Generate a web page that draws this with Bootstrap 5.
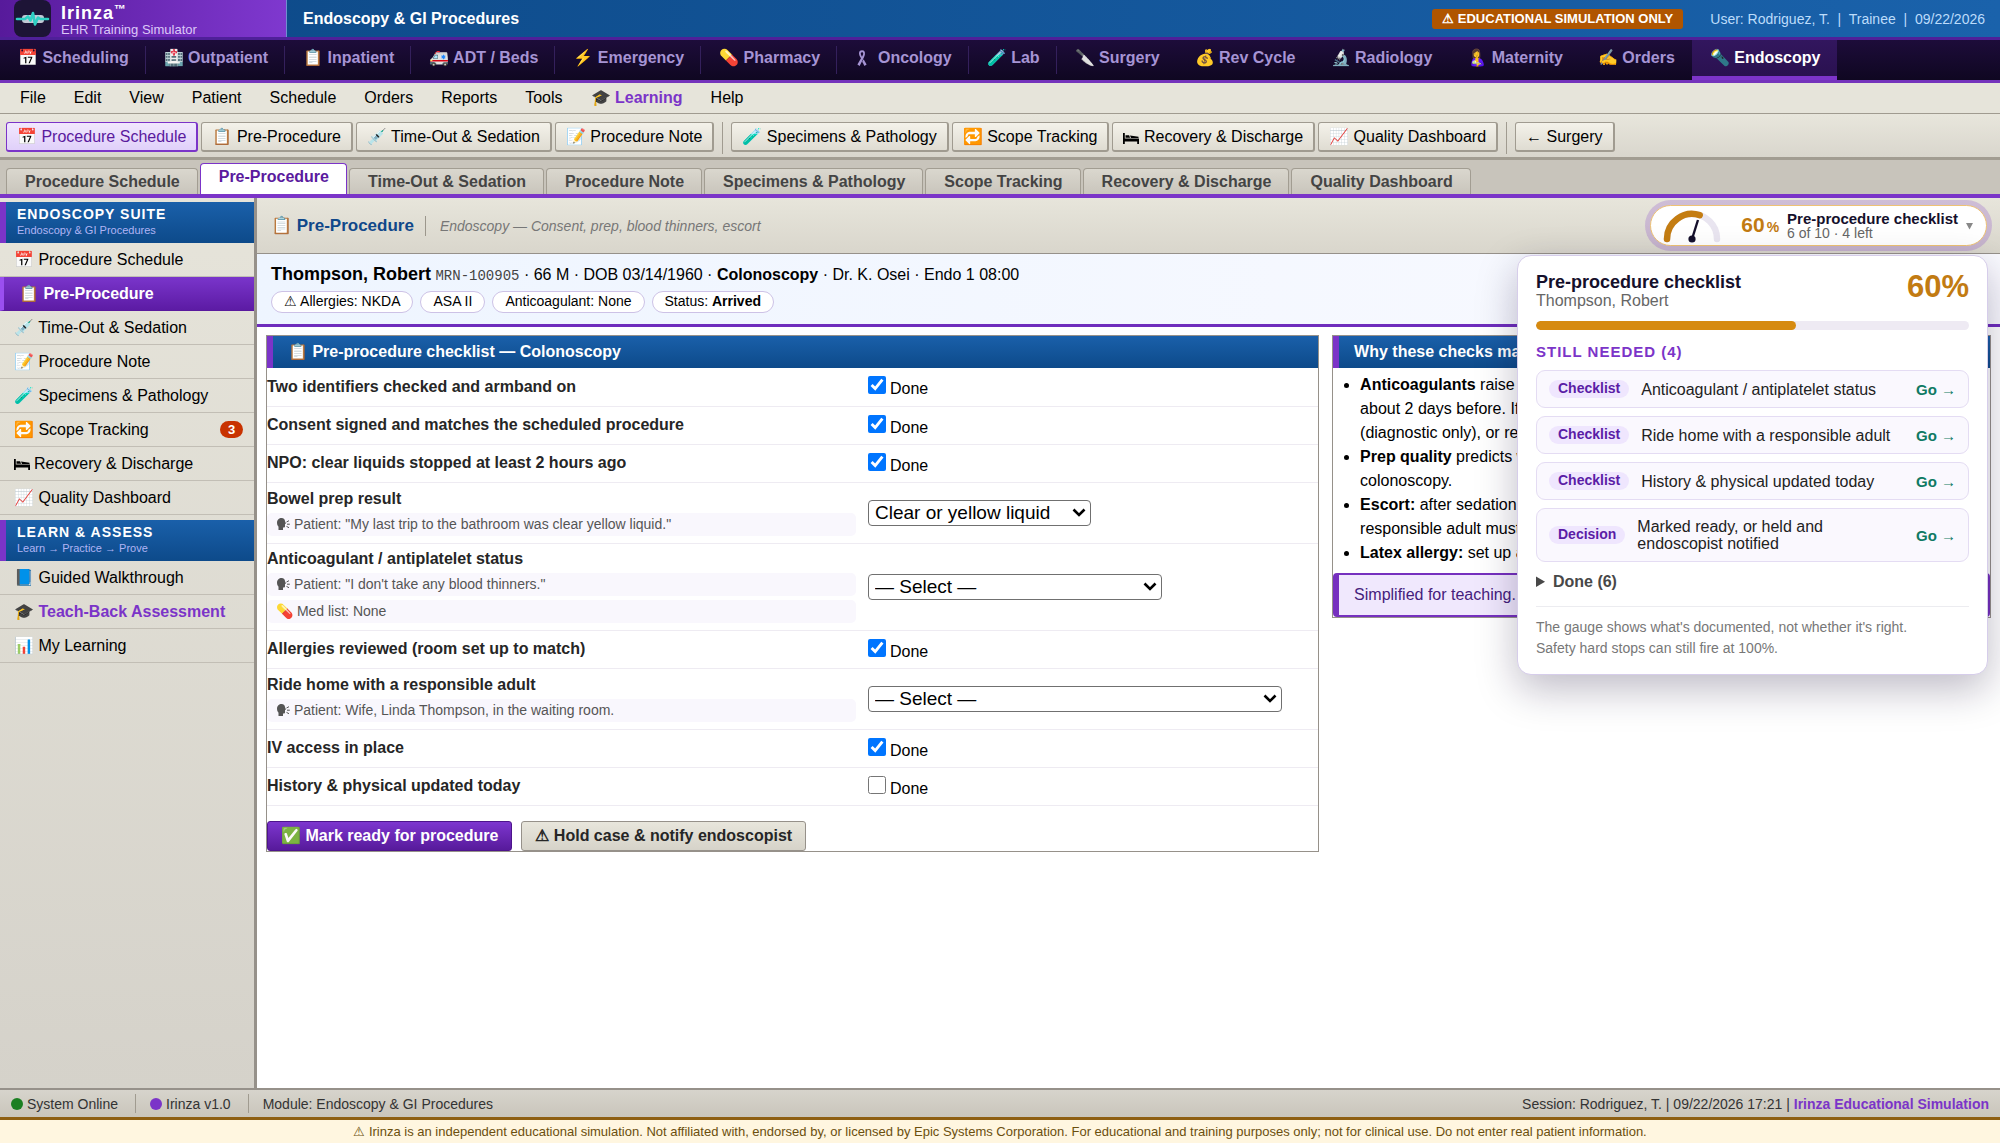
<!DOCTYPE html>
<html lang="en">
<head>
<meta charset="utf-8">
<meta name="viewport" content="width=device-width, initial-scale=1">
<title>Irinza – Endoscopy – Pre-Procedure</title>
<link href="https://cdn.jsdelivr.net/npm/bootstrap@5.3.0/dist/css/bootstrap.min.css" rel="stylesheet">
<style>
:root{--violet:#7b34c8;--violet-dark:#5a1a9e;--line:#96918a}
body{font-family:"Liberation Sans",Arial,sans-serif;font-size:16px;line-height:18px;color:#000;background:#fff}
a{text-decoration:none;color:inherit}
.ico{fill:currentColor;flex:none;vertical-align:-2px}

.titlebar{height:40px;border-bottom:3px solid #4f2099;background:linear-gradient(90deg,#0c4886,#1a62ab);color:#fff}
.brand{width:287px;padding-left:14px;gap:10px;background:linear-gradient(90deg,#571a9b,#7f38cf);border-right:1px solid #6f8fd0}
.brand-text{padding-top:4px}
.brand-name{font-size:18px;line-height:17px;letter-spacing:1px}
.brand-name sup{font-size:12px;letter-spacing:0;top:-6px;line-height:0}
.brand-sub{font-size:13px;line-height:15px;color:#dcc8f8}
.sim-badge{background:#b05500;border-radius:3px;font-size:13px;line-height:20px;padding:0 10px}
.user-info{color:#bcdcfb;padding:0 15px 0 27px;font-size:14px;white-space:pre}

.modules{height:43px;border-bottom:3px solid #7433bb;background:linear-gradient(#1d0c3a,#0f0721)}
.modules a{position:relative;padding:0 17px 0 18px;color:#a694d4;font-weight:700;border-bottom:4px solid transparent;display:flex;align-items:center;height:40px;white-space:pre}
.modules a.sep::after{content:"";position:absolute;right:0;top:6px;height:28px;width:1px;background:#34205c}
.modules a.current{color:#fff;background:linear-gradient(#32165e,#2a1150);border-bottom-color:#7d34c9}

.menus{height:31px;gap:28px;padding:0 20px;background:#e6e4da;border-bottom:1px solid #a09b90}
.learn{color:var(--violet);font-weight:700}

.tools{height:46px;padding:8px 6px;gap:3px;background:linear-gradient(#e8e6dc,#d9d6cd);border-bottom:3px solid #a29d92}
.tool{height:30px;padding:0 10px;border:1px solid #a09b90;border-bottom-width:2px;border-right-width:2px;border-radius:3px;background:linear-gradient(#f4f2ea,#dfdcd2);white-space:nowrap;color:#000}
.tool.on{border-color:var(--violet);background:linear-gradient(#f1e8fe,#e0d0fa);color:var(--violet-dark)}
.tool-sep{width:1px;height:32px;margin:0 5px;background:#a09b90}

.tabs{height:38px;padding:0 6px;gap:2px;background:#c8c4bb;border-bottom:4px solid var(--violet)}
.tabs a{height:26px;padding:3px 17px 0 18px;border:1px solid #a29d92;border-bottom:0;border-radius:4px 4px 0 0;background:linear-gradient(#dad7ce,#c9c5bc);color:#444;font-weight:700;line-height:20px}
.tabs a.on{height:31px;border-color:var(--violet);background:#fff;color:var(--violet-dark)}

.side{width:257px;flex:none;padding-top:4px;border-right:3px solid var(--line);background:linear-gradient(#e6e4da,#d5d2ca)}
.side-head{height:41px;padding:2px 11px 0;border-left:6px solid var(--violet);background:linear-gradient(#1a60aa,#0d4a8a);color:#fff}
.side-head b{display:block;font-size:14px;line-height:20px;letter-spacing:1px}
.side-head span{display:block;font-size:11px;line-height:12px;color:#b0b4f4}
.side-link{display:flex;align-items:center;height:34px;padding:0 11px 0 14px;border-bottom:1px solid #c2beb5}
.side-link.on{padding-left:15px;border-left:4px solid #9a4ff0;border-bottom-color:#5a1a9e;background:linear-gradient(#7a35cb,#5c1ba4);color:#fff;font-weight:700}
.side-link + .side-head{margin-top:5px}
.count{width:23px;height:17px;border-radius:9px;background:#c83200;color:#fff;font-size:13px;line-height:17px;text-align:center;font-weight:700}

.page-head{height:56px;padding:0 13px 0 14px;background:linear-gradient(#e7e5db,#d9d6cc);border-bottom:1px solid var(--line)}
.page-title{font-size:17px;line-height:20px;font-weight:700;color:#10488a;margin:0}
.page-desc{font-size:14px;font-style:italic;color:#777;border-left:1px solid #9c978c;margin-left:11px;padding-left:14px;line-height:20px}

.gauge{height:41px;padding:0 13px 0 10px;border:1px solid #eec274;border-radius:21px;background:#fff;box-shadow:0 0 0 5px rgba(124,52,200,.22)}
.gauge-pct{color:#c27b12;font-size:21px;font-weight:700;margin-left:20px}
.gauge-pct small{font-size:14px;margin-left:2px;font-weight:700}
.gauge-name{font-size:15px;line-height:15px;font-weight:700;color:#15102c;display:block}
.gauge-left{font-size:14px;line-height:15px;color:#666;display:block}

.patient{padding:11px 14px 0;height:73px;background:linear-gradient(90deg,#eef5ff,#fafaff);border-bottom:3px solid #6f2dbd}
.patient-line{margin-bottom:6px}
.patient-name{font-size:18px}
.mrn{font-family:"Liberation Mono",monospace;font-size:14px;color:#444}
.chips{gap:7px}
.chip{height:22px;line-height:18px;padding:0 12px;border:1px solid #cdc2e6;border-radius:11px;background:#fff;font-size:14px}

.work{padding:8px 9px 0;gap:13px}
.panel{border:1px solid var(--line);background:#fff}
.left-panel{flex:1056 1 0}
.right-panel{flex:660 1 0;min-width:0}
.panel-head{padding:7px 15px;border-left:6px solid var(--violet);background:linear-gradient(#1a60aa,#0d4a8a);color:#fff;font-size:16px;line-height:18px;font-weight:700;margin:0}
.checks{width:100%}
.checks th{width:600px;padding:0 11px 0 0;color:#262626;vertical-align:middle}
.checks tr{border-bottom:1px solid #eeebf2;height:38px}
.checks tr.one{height:61px}
.checks tr.two{height:87px}
.hint{display:block;margin-top:5px;padding:0 9px;height:23px;line-height:22px;border-radius:5px;background:#f9f7fd;color:#555;font-size:14px;font-weight:400}
.hint + .hint{margin-top:4px}
.done{display:inline-flex;gap:4px;line-height:18px;padding-top:5px}
.done input{width:18px;height:18px;margin:-4px 0 4px}
.pick{display:block;height:26px;padding:0 30px 0 6px;border:1px solid #707070;border-radius:4px;font-size:19px;line-height:24px;color:#000;appearance:none;background:#fff url("data:image/svg+xml,%3Csvg xmlns='http://www.w3.org/2000/svg' width='14' height='9' viewBox='0 0 14 9'%3E%3Cpath d='M1.5 1.5 7 7l5.500-5.500' fill='none' stroke='%23000' stroke-width='2.600'/%3E%3C/svg%3E") no-repeat right 4px center}
.pick-s{width:223px}.pick-m{width:294px}.pick-l{width:414px}
.acts{gap:9px;padding-top:15px}
.act{height:30px;padding:0 13px;border:1px solid #4d148c;border-radius:3px;font-weight:700;color:#fff;background:linear-gradient(#7d36cf,#571a9b)}
.act.plain{border-color:#96918a;background:linear-gradient(#e8e6dc,#d6d3c9);color:#262626}

.why{margin:0;padding:5px 10px 8px 27px;line-height:24px;white-space:nowrap;overflow:hidden}
.note{padding:11px 15px;border:2px solid #7630bf;border-left-width:6px;border-radius:4px;background:#f0e8fd;color:#45207c}

.pop{position:absolute;right:12px;top:57px;width:471px;padding:17px 18px 15px;border:1px solid #d6cdea;border-radius:14px;background:#fff;box-shadow:0 14px 40px rgba(20,10,50,.28);z-index:5}
.pop-title{font-size:18px;line-height:19px;font-weight:700;color:#15102c;margin:0}
.pop-who{color:#666}
.pop-pct{font-size:31px;line-height:28px;font-weight:700;color:#c27b12}
.meter{height:9px;border-radius:5px;background:#eeeaf3;margin:11px 0 12px}
.meter .progress-bar{background:#d68a10;border-radius:5px}
.need{font-size:15px;line-height:20px;letter-spacing:1px;color:var(--violet);font-weight:700;margin:0 0 8px}
.todo{min-height:38px;padding:9px 12px;margin-bottom:8px;border:1px solid #e4dcf3;border-radius:9px;background:#faf8fe;color:#222;line-height:17px}
.kind{height:18px;line-height:17px;padding:0 9px;border-radius:9px;background:#efe6fe;color:#5b1da6;font-size:14px;font-weight:700}
.what{flex:1;margin:0 12px}
.todo a{color:#0f7a63;font-weight:700;font-size:15px;white-space:nowrap}
.pop summary{font-weight:700;color:#484848;padding:3px 0 0}
.pop-foot{margin:15px 0 0;padding-top:10px;border-top:1px solid #ececf0;font-size:14px;line-height:21px;color:#777}

.status{height:29px;padding:0 11px;border-top:2px solid var(--line);background:linear-gradient(#d7d4cc,#c9c5bb);color:#333;font-size:14px}
.dot{width:12px;height:12px;border-radius:50%;background:#1b7f22}
.dot.v{background:var(--violet)}
.bar{width:1px;height:19px;background:#a09b90;margin:0 14px 0 17px}
.legal{height:26px;border-top:3px solid #8e5f12;background:#fff6e0;color:#6b4f0e;font-size:13px;line-height:23px}
</style>
</head>
<body class="d-flex flex-column vh-100 overflow-hidden">
<svg class="d-none" aria-hidden="true">
  <symbol id="bed" viewBox="0 0 16 12"><path d="M0 1h1.800v5.500H16V12h-1.800V9.500H1.800V12H0z"/><path d="M2.500 3.200h3.600l1 2.500H2.500zM7 3.600l8.500 1.100V6H8z"/></symbol>
  <symbol id="speak" viewBox="0 0 14 14"><path d="M1 6C1 2.500 3.200 1 5.500 1S9 2.300 9 4.200l1 2.300-1 .6v2.400q0 1-1 1H7V13H2.500V9.800Q1 8.500 1 6z"/><path d="m10.500 5 2.500-1.300M11 7.200h2.800M10.500 9.400 13 10.700" stroke="currentColor" stroke-width="1"/></symbol>
  <symbol id="ribbon" viewBox="0 0 14 18"><path d="M7 1.200c2.600 0 3.300 2 2.900 4.200-.3 1.600-1.200 3.400-2 5L4.600 17 2.400 15.500 6 9.300C4.500 7 4 5.600 4 4.200 4 2.400 5 1.200 7 1.200zm0 2c-1 0-1.400.7-1.100 2 .2.900.6 1.600 1.100 2.500.7-1.200 1.200-2.300 1.200-3.100C8.200 3.700 7.800 3.200 7 3.200z"/><path d="m8.600 10.300 3 5.200L9.500 17l-2.300-4.300z"/></symbol>
</svg>
<header>
  <div class="titlebar d-flex align-items-stretch">
    <div class="brand d-flex align-items-center">
      <svg width="37" height="37" viewBox="0 0 37 37" aria-hidden="true"><rect width="37" height="37" rx="8" fill="#1d1436"/><rect x="8" y="15" width="22" height="8" rx="3" fill="#c3c9d6"/><path d="M3 19h8l3-2.500 2.500 4L19 13l2 11.500 3-7 2.500 1.500H34" fill="none" stroke="#2fd0c4" stroke-width="2.600" stroke-linejoin="round" stroke-linecap="round"/></svg>
      <div class="brand-text"><div class="brand-name fw-bold">Irinza<sup>™</sup></div><div class="brand-sub">EHR Training Simulator</div></div>
    </div>
    <div class="flex-grow-1 d-flex align-items-center ps-3">
      <b class="me-auto">Endoscopy &amp; GI Procedures</b>
      <span class="sim-badge fw-bold">⚠ EDUCATIONAL SIMULATION ONLY</span>
      <span class="user-info">User: Rodriguez, T.  |  Trainee  |  09/22/2026</span>
    </div>
  </div>
  <nav class="modules d-flex" aria-label="Modules">
    <a class="sep" href="#">📅 Scheduling</a><a class="sep" href="#">🏥 Outpatient</a><a class="sep" href="#">📋 Inpatient</a><a class="sep" href="#">🚑 ADT / Beds</a><a class="sep" href="#">⚡ Emergency</a><a class="sep" href="#">💊 Pharmacy</a><a class="sep" href="#"><svg class="ico" width="14" height="18" aria-hidden="true"><use href="#ribbon"/></svg>  Oncology</a><a class="sep" href="#">🧪 Lab</a><a href="#">🔪 Surgery</a><a href="#">💰 Rev Cycle</a><a href="#">🔬 Radiology</a><a href="#">🤱 Maternity</a><a href="#">✍️ Orders</a><a class="current" href="#">🔦 Endoscopy</a>
  </nav>
  <nav class="menus d-flex align-items-center" aria-label="Menu">
    <a href="#">File</a><a href="#">Edit</a><a href="#">View</a><a href="#">Patient</a><a href="#">Schedule</a><a href="#">Orders</a><a href="#">Reports</a><a href="#">Tools</a><a class="learn" href="#">🎓 Learning</a><a href="#">Help</a>
  </nav>
  <div class="tools d-flex align-items-start">
    <button class="tool on">📅 Procedure Schedule</button><button class="tool">📋 Pre-Procedure</button><button class="tool">💉 Time-Out &amp; Sedation</button><button class="tool">📝 Procedure Note</button><span class="tool-sep"></span><button class="tool">🧪 Specimens &amp; Pathology</button><button class="tool">🔁 Scope Tracking</button><button class="tool"><svg class="ico" width="16" height="12" aria-hidden="true"><use href="#bed"/></svg> Recovery &amp; Discharge</button><button class="tool">📈 Quality Dashboard</button><span class="tool-sep"></span><button class="tool">← Surgery</button>
  </div>
  <nav class="tabs d-flex align-items-end" aria-label="Tabs">
    <a href="#">Procedure Schedule</a><a class="on" href="#">Pre-Procedure</a><a href="#">Time-Out &amp; Sedation</a><a href="#">Procedure Note</a><a href="#">Specimens &amp; Pathology</a><a href="#">Scope Tracking</a><a href="#">Recovery &amp; Discharge</a><a href="#">Quality Dashboard</a>
  </nav>
</header>

<div class="d-flex flex-grow-1">
  <aside class="side">
    <div class="side-head"><b>ENDOSCOPY SUITE</b><span>Endoscopy &amp; GI Procedures</span></div>
    <a class="side-link" href="#">📅 Procedure Schedule</a>
    <a class="side-link on" href="#">📋 Pre-Procedure</a>
    <a class="side-link" href="#">💉 Time-Out &amp; Sedation</a>
    <a class="side-link" href="#">📝 Procedure Note</a>
    <a class="side-link" href="#">🧪 Specimens &amp; Pathology</a>
    <a class="side-link" href="#">🔁 Scope Tracking <span class="count ms-auto">3</span></a>
    <a class="side-link" href="#"><svg class="ico me-1" width="16" height="12" aria-hidden="true"><use href="#bed"/></svg>Recovery &amp; Discharge</a>
    <a class="side-link" href="#">📈 Quality Dashboard</a>
    <div class="side-head"><b>LEARN &amp; ASSESS</b><span>Learn → Practice → Prove</span></div>
    <a class="side-link" href="#">📘 Guided Walkthrough</a>
    <a class="side-link learn" href="#">🎓 Teach-Back Assessment</a>
    <a class="side-link" href="#">📊 My Learning</a>
  </aside>

  <main class="flex-grow-1 position-relative">
    <div class="page-head d-flex align-items-center">
      <h1 class="page-title">📋 Pre-Procedure</h1>
      <span class="page-desc me-auto">Endoscopy — Consent, prep, blood thinners, escort</span>
      <button class="gauge d-flex align-items-center text-start" aria-expanded="true">
        <svg width="60" height="36" viewBox="0 0 60 36" aria-hidden="true"><path d="M6 31a25 25 0 0 1 50 0" fill="none" stroke="#e9e5f0" stroke-width="6.500" stroke-linecap="round"/><path d="M6 31A25 25 0 0 1 38.700 7.200" fill="none" stroke="#c47d12" stroke-width="6.500" stroke-linecap="round"/><path d="M31 31 37 12" stroke="#15102c" stroke-width="2.400"/><circle cx="31" cy="31" r="3.600" fill="#15102c"/></svg>
        <span class="gauge-pct">60<small>%</small></span>
        <span class="ms-2"><span class="gauge-name">Pre-procedure checklist</span><span class="gauge-left">6 of 10 · 4 left</span></span>
        <svg class="ms-2" width="7" height="8" viewBox="0 0 7 8" aria-hidden="true"><path d="M0 1h7L3.500 7.500z" fill="#888"/></svg>
      </button>
    </div>

    <section class="patient">
      <div class="patient-line"><b class="patient-name">Thompson, Robert</b> <span class="mrn">MRN-100905</span> · 66 M · DOB 03/14/1960 · <b>Colonoscopy</b> · Dr. K. Osei · Endo 1 08:00</div>
      <div class="d-flex chips"><span class="chip">⚠ Allergies: NKDA</span><span class="chip">ASA II</span><span class="chip">Anticoagulant: None</span><span class="chip">Status: <b>Arrived</b></span></div>
    </section>

    <div class="work d-flex align-items-start">
      <section class="panel left-panel">
        <h2 class="panel-head">📋 Pre-procedure checklist — Colonoscopy</h2>
        <table class="checks">
          <tr><th scope="row">Two identifiers checked and armband on</th><td><label class="done"><input type="checkbox" checked> Done</label></td></tr>
          <tr><th scope="row">Consent signed and matches the scheduled procedure</th><td><label class="done"><input type="checkbox" checked> Done</label></td></tr>
          <tr><th scope="row">NPO: clear liquids stopped at least 2 hours ago</th><td><label class="done"><input type="checkbox" checked> Done</label></td></tr>
          <tr class="one"><th scope="row"><label class="d-block" for="prep">Bowel prep result</label><span class="hint"><svg class="ico" width="14" height="14" aria-hidden="true"><use href="#speak"/></svg> Patient: "My last trip to the bathroom was clear yellow liquid."</span></th><td><select id="prep" class="pick pick-s"><option>Clear or yellow liquid</option></select></td></tr>
          <tr class="two"><th scope="row"><label class="d-block" for="anti">Anticoagulant / antiplatelet status</label><span class="hint"><svg class="ico" width="14" height="14" aria-hidden="true"><use href="#speak"/></svg> Patient: "I don't take any blood thinners."</span><span class="hint">💊 Med list: None</span></th><td><select id="anti" class="pick pick-m"><option>— Select —</option></select></td></tr>
          <tr><th scope="row">Allergies reviewed (room set up to match)</th><td><label class="done"><input type="checkbox" checked> Done</label></td></tr>
          <tr class="one"><th scope="row"><label class="d-block" for="ride">Ride home with a responsible adult</label><span class="hint"><svg class="ico" width="14" height="14" aria-hidden="true"><use href="#speak"/></svg> Patient: Wife, Linda Thompson, in the waiting room.</span></th><td><select id="ride" class="pick pick-l"><option>— Select —</option></select></td></tr>
          <tr><th scope="row">IV access in place</th><td><label class="done"><input type="checkbox" checked> Done</label></td></tr>
          <tr><th scope="row">History &amp; physical updated today</th><td><label class="done"><input type="checkbox"> Done</label></td></tr>
        </table>
        <div class="d-flex acts"><button class="act">✅ Mark ready for procedure</button><button class="act plain">⚠ Hold case &amp; notify endoscopist</button></div>
      </section>
      <section class="panel right-panel">
        <h2 class="panel-head">Why these checks matter</h2>
        <ul class="why">
          <li><b>Anticoagulants</b> raise bleeding risk.<br>about 2 days before. If not,<br>(diagnostic only), or reschedule.</li>
          <li><b>Prep quality</b> predicts what is seen at<br>colonoscopy.</li>
          <li><b>Escort:</b> after sedation, a<br>responsible adult must stay.</li>
          <li><b>Latex allergy:</b> set up a safe room.</li>
        </ul>
        <div class="note">Simplified for teaching.</div>
      </section>
    </div>

    <section class="pop" aria-label="Pre-procedure checklist">
      <div class="d-flex justify-content-between align-items-start">
        <div><h2 class="pop-title">Pre-procedure checklist</h2><div class="pop-who">Thompson, Robert</div></div>
        <div class="pop-pct">60%</div>
      </div>
      <div class="progress meter"><div class="progress-bar" style="width:60%"></div></div>
      <h3 class="need">STILL NEEDED (4)</h3>
      <div class="todo d-flex align-items-center"><span class="kind">Checklist</span><span class="what">Anticoagulant / antiplatelet status</span><a href="#">Go →</a></div>
      <div class="todo d-flex align-items-center"><span class="kind">Checklist</span><span class="what">Ride home with a responsible adult</span><a href="#">Go →</a></div>
      <div class="todo d-flex align-items-center"><span class="kind">Checklist</span><span class="what">History &amp; physical updated today</span><a href="#">Go →</a></div>
      <div class="todo d-flex align-items-center"><span class="kind">Decision</span><span class="what">Marked ready, or held and endoscopist notified</span><a href="#">Go →</a></div>
      <details><summary>Done (6)</summary></details>
      <p class="pop-foot">The gauge shows what's documented, not whether it's right.<br>Safety hard stops can still fire at 100%.</p>
    </section>
  </main>
</div>

<footer>
  <div class="status d-flex align-items-center">
    <span class="dot me-1"></span>System Online<span class="bar"></span><span class="dot v me-1"></span>Irinza v1.0<span class="bar"></span>Module: Endoscopy &amp; GI Procedures
    <span class="ms-auto">Session: Rodriguez, T. | 09/22/2026 17:21 | <b class="learn">Irinza Educational Simulation</b></span>
  </div>
  <div class="legal text-center">⚠ Irinza is an independent educational simulation. Not affiliated with, endorsed by, or licensed by Epic Systems Corporation. For educational and training purposes only; not for clinical use. Do not enter real patient information.</div>
</footer>
<script src="https://cdn.jsdelivr.net/npm/bootstrap@5.3.0/dist/js/bootstrap.bundle.min.js"></script>
</body>
</html>
